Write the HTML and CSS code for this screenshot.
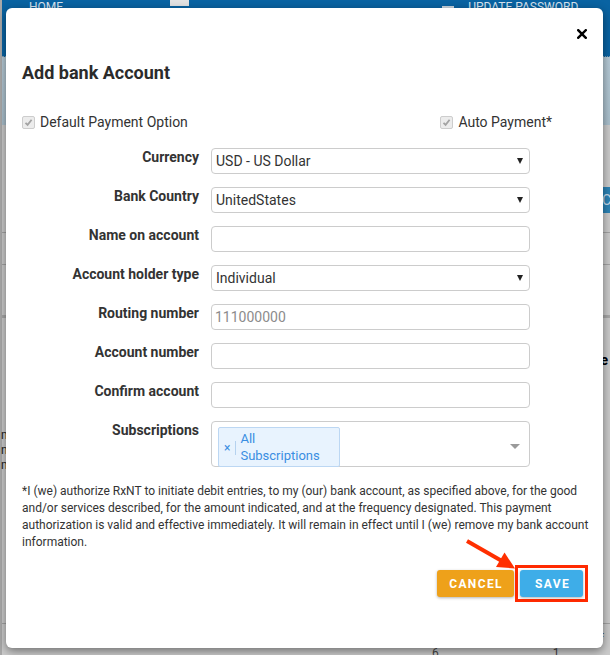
FILE: index.html
```html
<!DOCTYPE html>
<html lang="en">
<head>
  <meta charset="UTF-8" />
  <meta name="viewport" content="width=device-width, initial-scale=1.0" />
  <title>Add bank Account</title>
  <link rel="stylesheet" href="styles.css">
</head>
<body>
  <div class="page">
    <header class="topnav">
      <span class="nav-item nav-home">HOME</span>
      <span class="nav-tab"></span>
      <span class="nav-icon"></span>
      <span class="nav-item">UPDATE PASSWORD</span>
    </header>
    <div class="subbar"></div>
    <div class="content">
      <div class="toolbar">
        <span class="toolbar-btn">C</span>
      </div>
      <div class="rule rule-1"></div>
      <div class="rule rule-2"></div>
      <div class="rule rule-thick"></div>
      <div class="col-title">Type</div>
      <div class="cut-text">
        <span>mail</span>
        <span>new</span>
        <span>mo</span>
      </div>
      <div class="rule rule-foot"></div>
      <div class="pager">
        <span>1 to 6 of 6</span>
        <span>Page 1 of 1</span>
      </div>
    </div>
  </div>

  <div class="modal">
    <div class="modal-top">
      <svg class="close" width="10" height="10" viewBox="0 0 10 10">
        <path d="M1.2 1.2 L8.8 8.8 M8.8 1.2 L1.2 8.8" stroke="#000" stroke-width="2.4" stroke-linecap="square" />
      </svg>
    </div>
    <h4 class="modal-title">Add bank Account</h4>

    <div class="check-row">
      <label class="check">
        <span class="check-box">
          <svg width="9" height="9" viewBox="0 0 9 9"><path d="M1.5 4.8 L3.6 6.9 L7.6 1.8" fill="none" stroke="#a3a3a3" stroke-width="1.8" /></svg>
        </span>
        Default Payment Option
      </label>
      <label class="check check-auto">
        <span class="check-box">
          <svg width="9" height="9" viewBox="0 0 9 9"><path d="M1.5 4.8 L3.6 6.9 L7.6 1.8" fill="none" stroke="#a3a3a3" stroke-width="1.8" /></svg>
        </span>
        Auto Payment*
      </label>
    </div>

    <form class="bank-form">
      <label class="field-label">Currency</label>
      <div class="select"><span>USD - US Dollar</span><span class="caret"></span></div>

      <label class="field-label">Bank Country</label>
      <div class="select"><span>UnitedStates</span><span class="caret"></span></div>

      <label class="field-label">Name on account</label>
      <input class="field" type="text">

      <label class="field-label">Account holder type</label>
      <div class="select"><span>Individual</span><span class="caret"></span></div>

      <label class="field-label">Routing number</label>
      <input class="field" type="text" placeholder="111000000">

      <label class="field-label">Account number</label>
      <input class="field" type="text">

      <label class="field-label">Confirm account</label>
      <input class="field" type="text">

      <label class="field-label">Subscriptions</label>
      <div class="multi">
        <span class="tag">
          <span class="tag-x">×</span>
          <span class="tag-text">All Subscriptions</span>
        </span>
        <span class="multi-caret"></span>
      </div>
    </form>

    <p class="disclaimer">*I (we) authorize RxNT to initiate debit entries, to my (our) bank account, as specified above, for the good<br>
      and/or services described, for the amount indicated, and at the frequency designated. This payment<br>
      authorization is valid and effective immediately. It will remain in effect until I (we) remove my bank account<br>
      information.</p>

    <div class="modal-footer">
      <button class="btn btn-cancel" type="button">CANCEL</button>
      <span class="highlight">
        <button class="btn btn-save" type="button">SAVE</button>
      </span>
    </div>

    <svg class="pointer" width="597" height="640" viewBox="0 0 597 640">
      <line x1="461" y1="533" x2="495" y2="552.5" stroke="#ff2f00" stroke-width="4" />
      <polygon points="509,560.5 490,559 498.5,544.5" fill="#ff2f00" />
    </svg>
  </div>
</body>
</html>
```

FILE: styles.css
```css
body {
  margin: 0;
  font-family: Roboto, 'Liberation Sans', sans-serif;
  color: #333;
  width: 610px;
  height: 655px;
  overflow: hidden;
  position: relative;
}

/* page behind the dialog, already dimmed */
.page {
  height: 655px;
  background-color: #cbcbcb;
  border-left: 2px solid #a9a9a9;
  box-sizing: border-box;
}

.topnav {
  height: 57px;
  background-color: #0963a2;
  display: flex;
  align-items: flex-start;
  color: #d6e2ee;
  font-size: 12px;
  line-height: 12px;
  border-bottom: 1px dotted #7f9fb7;
  box-sizing: border-box;
}

.nav-item {
  padding-top: 1px;
}

.nav-home {
  margin-left: 27px;
}

.nav-tab {
  width: 19px;
  height: 6px;
  background-color: #e2e2e2;
  margin-left: 107px;
}

.nav-icon {
  width: 12px;
  height: 6px;
  border-bottom: 2px solid #c8d4de;
  margin-left: 253px;
  margin-right: 14px;
}

.subbar {
  height: 68px;
  background: linear-gradient(#b6cad6, #a9bfcc);
}

.toolbar {
  height: 88px;
  display: flex;
  justify-content: flex-end;
  align-items: flex-end;
}

.toolbar-btn {
  width: 40px;
  height: 26px;
  margin-right: -30px;
  background-color: #2c83b5;
  color: #c9dcea;
  font-size: 14px;
  line-height: 26px;
  padding-left: 2px;
  box-sizing: border-box;
}

.rule {
  height: 1px;
  background-color: #a3a3a3;
}

.rule-1 {
  margin-top: 19px;
}

.rule-2 {
  margin-top: 31px;
}

.rule-thick {
  margin-top: 50px;
  height: 3px;
  background-color: #a8a8a8;
}

.col-title {
  margin-top: 34px;
  text-align: right;
  font-weight: bold;
  font-size: 14px;
  color: #000;
  margin-right: 2px;
}

.cut-text {
  margin-top: 60px;
  display: flex;
  flex-direction: column;
  font-size: 12px;
  line-height: 15px;
  color: #222;
  margin-left: -1px;
}

.rule-foot {
  margin-top: 150px;
}

.pager {
  margin-top: 8px;
  display: flex;
  gap: 70px;
  padding-left: 430px;
  font-size: 12px;
  line-height: 14px;
  color: #444;
}

/* dialog */
.modal {
  position: absolute;
  left: 6px;
  top: 8px;
  width: 597px;
  height: 640px;
  background-color: #fff;
  border-radius: 6px;
  box-shadow: 0 3px 10px rgba(0, 0, 0, 0.45);
  padding: 0 16px;
  box-sizing: border-box;
}

.modal-top {
  display: flex;
  justify-content: flex-end;
  padding-top: 21px;
}

.close {
  display: block;
}

.modal-title {
  margin: 23px 0 0;
  font-size: 18px;
  line-height: 22px;
  font-weight: bold;
  color: #2b2b2b;
}

.check-row {
  display: flex;
  margin-top: 28px;
  height: 20px;
  align-items: center;
  font-size: 14px;
}

.check {
  display: flex;
  align-items: center;
  gap: 5px;
}

.check-auto {
  margin-left: auto;
  margin-right: 35px;
}

.check-box {
  width: 11px;
  height: 11px;
  border: 1px solid #cdcdcd;
  border-radius: 2px;
  background-color: #ececec;
  display: flex;
  align-items: center;
  justify-content: center;
}

.bank-form {
  display: grid;
  grid-template-columns: 177px 319px;
  column-gap: 12px;
  row-gap: 13px;
  margin-top: 16px;
}

.field-label {
  text-align: right;
  font-weight: bold;
  font-size: 14px;
  line-height: 18px;
  color: #333;
}

.select,
.field {
  height: 26px;
  border: 1px solid #ccc;
  border-radius: 4px;
  font-family: Roboto, 'Liberation Sans', sans-serif;
  font-size: 14px;
  color: #333;
  box-sizing: border-box;
}

.select {
  display: flex;
  align-items: center;
  justify-content: space-between;
  padding: 0 6px 0 4px;
}

.caret {
  width: 0;
  height: 0;
  border-left: 3px solid transparent;
  border-right: 3px solid transparent;
  border-top: 6px solid #222;
}

.field {
  width: 100%;
  padding: 0 3px;
  outline: none;
}

.field::placeholder {
  color: #8c8c8c;
}

.multi {
  height: 46px;
  border: 1px solid #ccc;
  border-radius: 4px;
  box-sizing: border-box;
  padding: 5px 9px 0 6px;
  display: flex;
  align-items: center;
}

.tag {
  align-self: flex-start;
  width: 122px;
  height: 40px;
  box-sizing: border-box;
  border: 1px solid #bcd7f3;
  border-radius: 2px;
  background-color: #e8f3fe;
  color: #3a8ee2;
  display: flex;
  align-items: center;
}

.tag-x {
  font-size: 12px;
  padding: 0 5px 0 5px;
  border-right: 1px solid #b5d2ef;
  line-height: 14px;
  margin-top: 2px;
}

.tag-text {
  flex: 1;
  padding: 0 5px 0 4px;
  font-size: 13px;
  line-height: 17px;
}

.multi-caret {
  margin-left: auto;
  width: 0;
  height: 0;
  border-left: 5px solid transparent;
  border-right: 5px solid transparent;
  border-top: 5px solid #9a9a9a;
}

.disclaimer {
  margin: 16px -8px 0 0;
  font-size: 12px;
  line-height: 17px;
  color: #333;
}

.modal-footer {
  display: flex;
  justify-content: flex-end;
  align-items: center;
  margin-top: 14px;
  margin-right: -1px;
}

.btn {
  height: 27px;
  border: none;
  border-radius: 3px;
  color: #fff;
  font-family: Roboto, 'Liberation Sans', sans-serif;
  font-weight: bold;
  font-size: 12px;
  letter-spacing: 1.4px;
  padding: 0 11px 0 12px;
  box-shadow: 0 1px 3px rgba(0, 0, 0, 0.3);
  cursor: pointer;
}

.btn-cancel {
  background-color: #eea11a;
  margin-right: 1px;
}

.btn-save {
  background-color: #3eade8;
  width: 63px;
  padding: 0 0 0 2px;
}

.highlight {
  display: flex;
  border: 3px solid #ff2a00;
  padding: 2px;
}

.pointer {
  position: absolute;
  left: 0;
  top: 0;
  pointer-events: none;
}
```
